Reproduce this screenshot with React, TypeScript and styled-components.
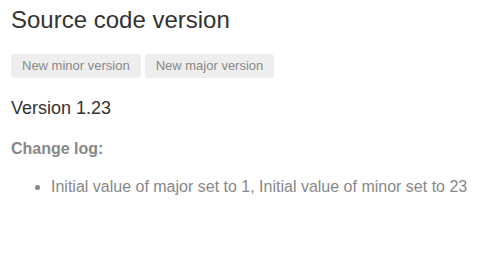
import React from "react";
import styled, { createGlobalStyle } from "styled-components";

const GlobalStyle = createGlobalStyle`
  html, body {
    margin: 0;
    padding: 0;
    background: #ffffff;
  }
  body {
    font-family: "Liberation Sans", Arial, sans-serif;
  }
`;

const Page = styled.div`
  padding: 6px 11px 0 11px;
  display: flex;
  flex-direction: column;
`;

const Title = styled.h1`
  margin: 0;
  font-size: 24px;
  line-height: 28px;
  font-weight: 400;
  color: #333333;
`;

const Toolbar = styled.div`
  display: flex;
  gap: 4px;
  margin-top: 20px;
`;

const Button = styled.button`
  font-family: "Liberation Sans", Arial, sans-serif;
  font-size: 13px;
  height: 24px;
  padding: 0 10px;
  border: 1px solid #eeeeee;
  border-radius: 3px;
  background: #eeeeee;
  color: #888888;
  line-height: 22px;
  cursor: pointer;
`;

const Version = styled.h2`
  margin: 19px 0 0 0;
  font-size: 18px;
  line-height: 22px;
  font-weight: 400;
  color: #333333;
`;

const ChangeLogHeading = styled.h3`
  margin: 20px 0 0 0;
  font-size: 16px;
  line-height: 20px;
  font-weight: 700;
  color: #888888;
`;

const List = styled.ul`
  margin: 18px 0 0 0;
  padding-left: 40px;
  color: #888888;
  font-size: 16px;
  line-height: 20px;
`;

const Item = styled.li``;

export default function App() {
  return (
    <>
      <GlobalStyle />
      <Page>
        <Title>Source code version</Title>
        <Toolbar>
          <Button>New minor version</Button>
          <Button>New major version</Button>
        </Toolbar>
        <Version>Version 1.23</Version>
        <ChangeLogHeading>Change log:</ChangeLogHeading>
        <List>
          <Item>Initial value of major set to 1, Initial value of minor set to 23</Item>
        </List>
      </Page>
    </>
  );
}
